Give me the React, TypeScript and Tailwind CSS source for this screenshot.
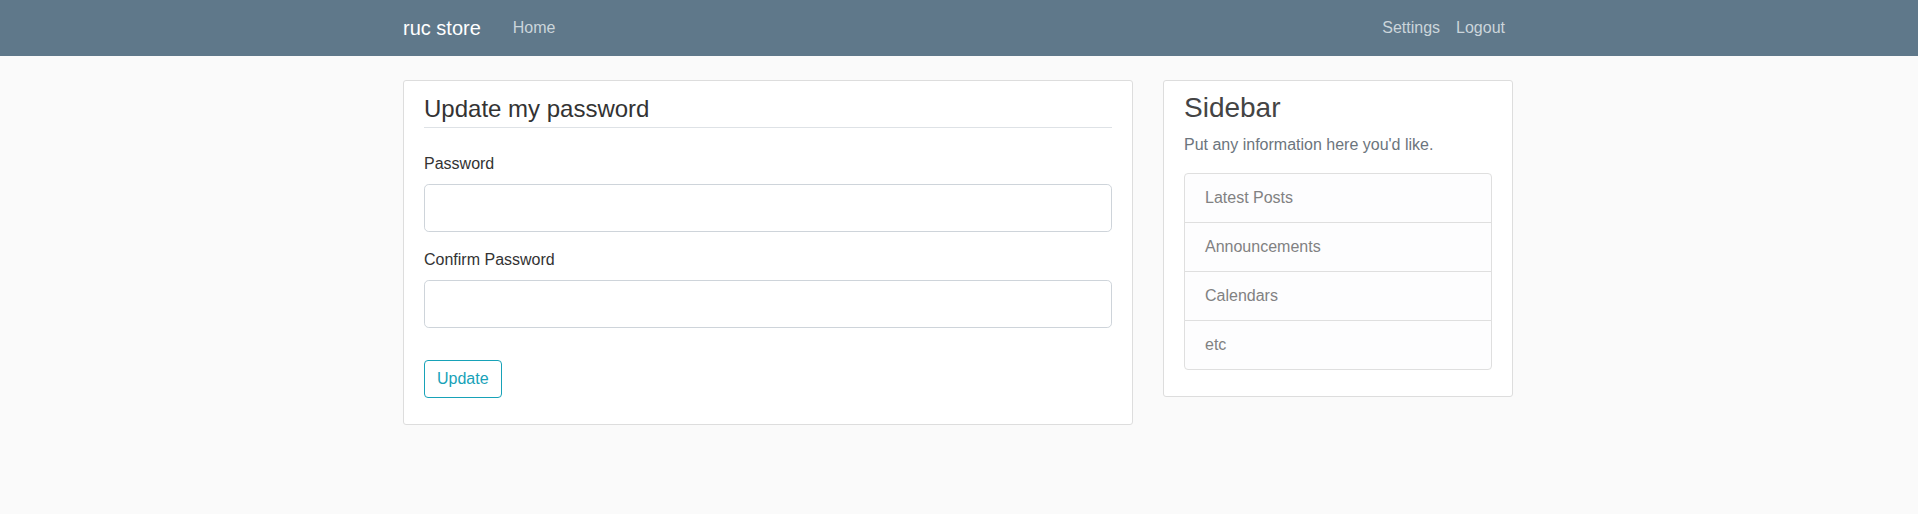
const links = ["Latest Posts", "Announcements", "Calendars", "etc"];

const Navbar = () => (
  <nav className="bg-[#5f788a] py-2 pl-4 pr-[18px]">
    <div className="mx-auto flex w-[1140px] items-center px-[15px]">
      <a className="mr-6 py-[5px] text-[20px] leading-[30px] text-white">ruc store</a>
      <a className="p-2 text-base leading-6 text-[#cbd5db]">Home</a>
      <div className="ml-auto flex">
        <a className="p-2 text-base leading-6 text-[#cbd5db]">Settings</a>
        <a className="p-2 text-base leading-6 text-[#cbd5db]">Logout</a>
      </div>
    </div>
  </nav>
);

const Field = ({ label }: { label: string }) => (
  <div className="mb-4">
    <label className="mb-2 block text-base leading-6">{label}</label>
    <input
      type="password"
      className="block h-12 w-full rounded-[4.8px] border border-[#ced4da] bg-white px-4 py-2 text-xl outline-none"
    />
  </div>
);

const PasswordForm = () => (
  <div className="w-[730px] rounded-[3px] border border-[#dddddd] bg-white px-5 py-[10px]">
    <form>
      <fieldset className="mb-4">
        <legend className="mb-6 w-full border-b border-[#dee2e6] text-2xl leading-9">
          Update my password
        </legend>
        <Field label="Password" />
        <Field label="Confirm Password" />
      </fieldset>
      <div className="mb-4">
        <button
          type="button"
          className="rounded-[4px] border border-[#17a2b8] px-3 py-[6px] text-base leading-6 text-[#17a2b8]"
        >
          Update
        </button>
      </div>
    </form>
  </div>
);

const Sidebar = () => (
  <div className="w-[350px] rounded-[3px] border border-[#dddddd] bg-white px-5 py-[10px]">
    <h3 className="mb-2 text-[28px] leading-[33.6px] text-[#444444]">Sidebar</h3>
    <p className="mb-4 text-base leading-6 text-[#6c757d]">Put any information here you'd like.</p>
    <ul className="mb-4 flex flex-col">
      {links.map((l, i) => (
        <li
          key={l}
          className={`border border-[#dfdfdf] bg-[#fdfdfe] px-5 py-3 text-base leading-6 text-[#818182] ${
            i === 0 ? "rounded-t-[4px]" : "-mt-px"
          } ${i === links.length - 1 ? "rounded-b-[4px]" : ""}`}
        >
          {l}
        </li>
      ))}
    </ul>
  </div>
);

export default function App() {
  return (
    <div className="min-h-[514px] bg-[#fafafa] font-['Liberation_Sans',Arial,sans-serif] text-[#333333]">
      <Navbar />
      <div className="pr-[2px]">
        <main className="mx-auto flex w-[1140px] items-start gap-[30px] px-[15px] pt-6">
          <PasswordForm />
          <Sidebar />
        </main>
      </div>
    </div>
  );
}
